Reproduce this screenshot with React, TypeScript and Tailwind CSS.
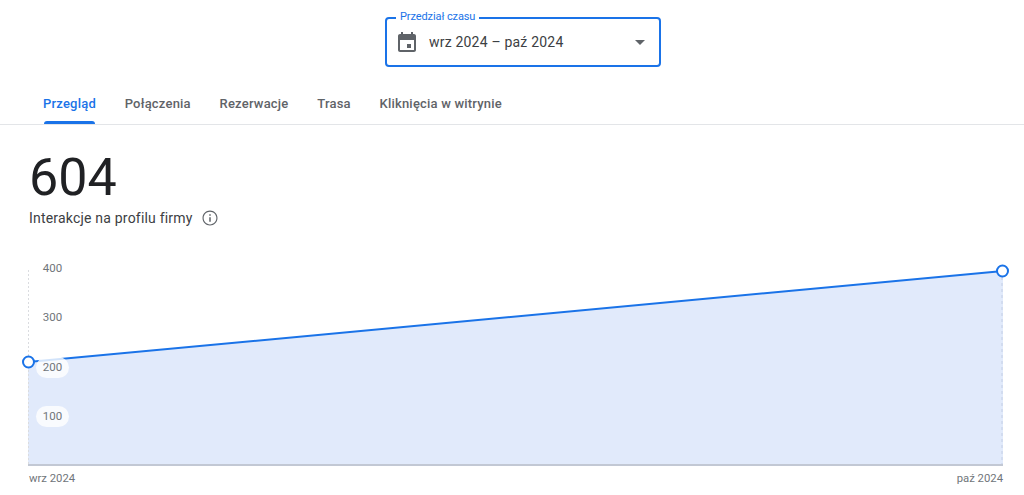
const TABS = ["Przegląd", "Połączenia", "Rezerwacje", "Trasa", "Kliknięcia w witrynie"];

const Y_LABELS = [
  { label: "400", top: "top-[6px]", pill: false },
  { label: "300", top: "top-[55px]", pill: false },
  { label: "200", top: "top-[105px]", pill: true },
  { label: "100", top: "top-[154px]", pill: true },
];

function CalendarIcon() {
  return (
    <svg width="24" height="24" viewBox="0 0 24 24" fill="#5f6368">
      <path d="M19 4h-1V2h-2v2H8V2H6v2H5c-1.100 0-2 .9-2 2v14c0 1.100.9 2 2 2h14c1.100 0 2-.9 2-2V6c0-1.100-.9-2-2-2zm0 16H5V10h14v10z" />
      <rect x="12" y="14" width="4" height="4" />
    </svg>
  );
}

function InfoIcon() {
  return (
    <svg width="18" height="18" viewBox="0 0 24 24" fill="#5f6368">
      <path d="M11 7h2v2h-2zm0 4h2v6h-2zm1-9C6.480 2 2 6.480 2 12s4.480 10 10 10 10-4.480 10-10S17.520 2 12 2zm0 18.500c-4.690 0-8.500-3.810-8.500-8.500S7.310 3.500 12 3.500s8.500 3.810 8.500 8.500-3.810 8.500-8.500 8.500z" />
    </svg>
  );
}

function Chart() {
  return (
    <div className="relative h-[243px] w-full">
      <svg width="1024" height="243" viewBox="0 0 1024 243" className="block">
        <polygon points="28,110 1003,19 1003,213 28,213" fill="#e1eafb" />
        <line x1="28.500" y1="18" x2="28.500" y2="213" stroke="#dadce0" strokeDasharray="2 2" />
        <line x1="1002" y1="19" x2="1002" y2="213" stroke="#d2dcf0" strokeWidth="2" strokeDasharray="3 3" />
        <line x1="28" y1="213" x2="1003" y2="213" stroke="#c2c8d4" strokeWidth="2" />
        <line x1="28" y1="110" x2="1003" y2="19" stroke="#1a73e8" strokeWidth="2" />
        <circle cx="28.500" cy="110" r="5.500" fill="#fff" stroke="#1a73e8" strokeWidth="2" />
        <circle cx="1002.500" cy="19" r="5.500" fill="#fff" stroke="#1a73e8" strokeWidth="2" />
      </svg>
      {Y_LABELS.map((y) => (
        <span
          key={y.label}
          className={`absolute left-[36px] ${y.top} w-[33px] rounded-[11px] text-center text-[11.500px] leading-[21px] text-[#70757a] ${y.pill ? "bg-white/80" : ""}`}
        >
          {y.label}
        </span>
      ))}
      <div className="absolute left-[29px] right-[21px] top-[220px] flex justify-between text-[11.300px] leading-[14px] text-[#70757a]">
        <span>wrz 2024</span>
        <span>paź 2024</span>
      </div>
    </div>
  );
}

export default function App() {
  return (
    <div className="h-[495px] w-[1024px] overflow-hidden bg-white font-['Roboto',sans-serif]">
      <div className="pl-[385px] pt-[17px]">
        <div className="relative flex h-[50px] w-[276px] items-center rounded-[4px] border-2 border-[#1a73e8] pl-[8px] pr-[14px]">
          <span className="absolute left-[9px] top-[-9px] bg-white px-[4px] text-[11px] leading-[14px] tracking-[-0.1px] text-[#1a73e8]">
            Przedział czasu
          </span>
          <CalendarIcon />
          <span className="ml-[10px] text-[14px] tracking-[0.2px] text-[#3c4043]">wrz 2024 – paź 2024</span>
          <span className="ml-auto h-0 w-0 border-x-[5px] border-t-[5px] border-x-transparent border-t-[#5f6368]" />
        </div>
      </div>

      <div className="mt-[19px] flex h-[39px] gap-[28.750px] border-b border-[#e3e5e8] pl-[43px]">
        {TABS.map((tab, i) => (
          <div
            key={tab}
            className={`relative pt-[8px] text-[13px] font-medium leading-[20px] tracking-[0.2px] ${i === 0 ? "text-[#1a73e8]" : "text-[#5f6368]"}`}
          >
            {tab}
            {i === 0 && <span className="absolute inset-x-[1px] bottom-0 h-[3px] rounded-t-[3px] bg-[#1a73e8]" />}
          </div>
        ))}
      </div>

      <div className="pl-[29px] pt-[23px]">
        <div className="text-[52px] font-normal leading-[60px] text-[#202124]">604</div>
        <div className="flex items-center gap-[8px] text-[14px] leading-[20px] tracking-[0.2px] text-[#3c4043]">
          Interakcje na profilu firmy
          <InfoIcon />
        </div>
      </div>

      <div className="mt-[24px]">
        <Chart />
      </div>
    </div>
  );
}
